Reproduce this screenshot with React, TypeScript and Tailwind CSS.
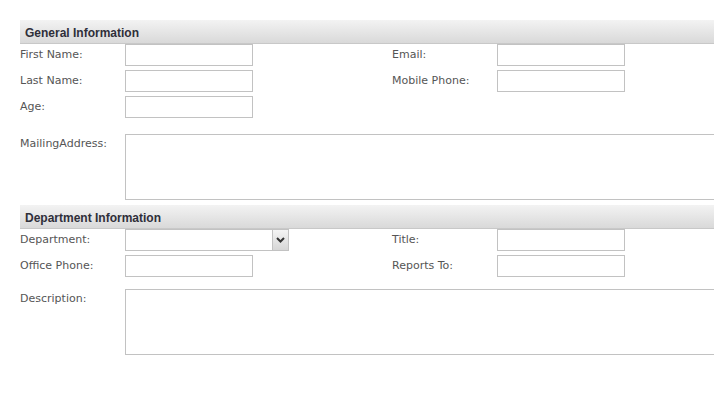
import React from "react"

const labelCls = "w-[105px] shrink-0 text-[11px] text-[#555] leading-[22px]"
const inputCls = "w-[128px] h-[22px] shrink-0 border border-[#c2c2c2] bg-white"

function SectionHeader({ title }: { title: string }) {
  return (
    <div className="h-[24px] border-b border-[#c8c8c8] bg-gradient-to-b from-[#f3f3f3] to-[#d9d9d9] pl-[5px] pt-[2px] flex items-center">
      <span className="font-bold text-[12px] text-[#2f2f3a] font-['Liberation_Sans',sans-serif]">{title}</span>
    </div>
  )
}

function Row({ l1, l2 }: { l1: string; l2?: string }) {
  return (
    <div className="flex items-start">
      <div className={labelCls}>{l1}</div>
      <div className={inputCls} />
      {l2 && (
        <>
          <div className="w-[139px] shrink-0" />
          <div className={labelCls}>{l2}</div>
          <div className={inputCls} />
        </>
      )}
    </div>
  )
}

function Select() {
  return (
    <div className="w-[164px] h-[22px] shrink-0 border border-[#c2c2c2] bg-white flex justify-end">
      <div className="w-[16px] h-full border-l border-[#c2c2c2] bg-gradient-to-b from-[#f4f4f4] to-[#d6d6d6] flex items-center justify-center">
        <svg width="9" height="6" viewBox="0 0 9 6">
          <path d="M1 1 L4.5 4.5 L8 1" stroke="#333" strokeWidth="2" fill="none" />
        </svg>
      </div>
    </div>
  )
}

function TextArea({ label }: { label: string }) {
  return (
    <div className="flex items-start">
      <div className="w-[105px] shrink-0 text-[11px] text-[#555] leading-[20px]">{label}</div>
      <div className="w-[620px] h-[66px] shrink-0 border border-[#c2c2c2] bg-white" />
    </div>
  )
}

export default function App() {
  return (
    <div className="w-[714px] h-[396px] overflow-hidden bg-white font-['DejaVu_Sans',sans-serif]">
      <div className="pt-[20px] pl-[20px]">
        <SectionHeader title="General Information" />
        <div className="flex flex-col gap-[4px]">
          <Row l1="First Name:" l2="Email:" />
          <Row l1="Last Name:" l2="Mobile Phone:" />
          <Row l1="Age:" />
        </div>
        <div className="mt-[16px]">
          <TextArea label="MailingAddress:" />
        </div>
        <div className="mt-[5px]">
          <SectionHeader title="Department Information" />
        </div>
        <div className="flex flex-col gap-[4px]">
          <div className="flex items-start">
            <div className={labelCls}>Department:</div>
            <Select />
            <div className="w-[103px] shrink-0" />
            <div className={labelCls}>Title:</div>
            <div className={inputCls} />
          </div>
          <Row l1="Office Phone:" l2="Reports To:" />
        </div>
        <div className="mt-[12px]">
          <TextArea label="Description:" />
        </div>
      </div>
    </div>
  )
}
